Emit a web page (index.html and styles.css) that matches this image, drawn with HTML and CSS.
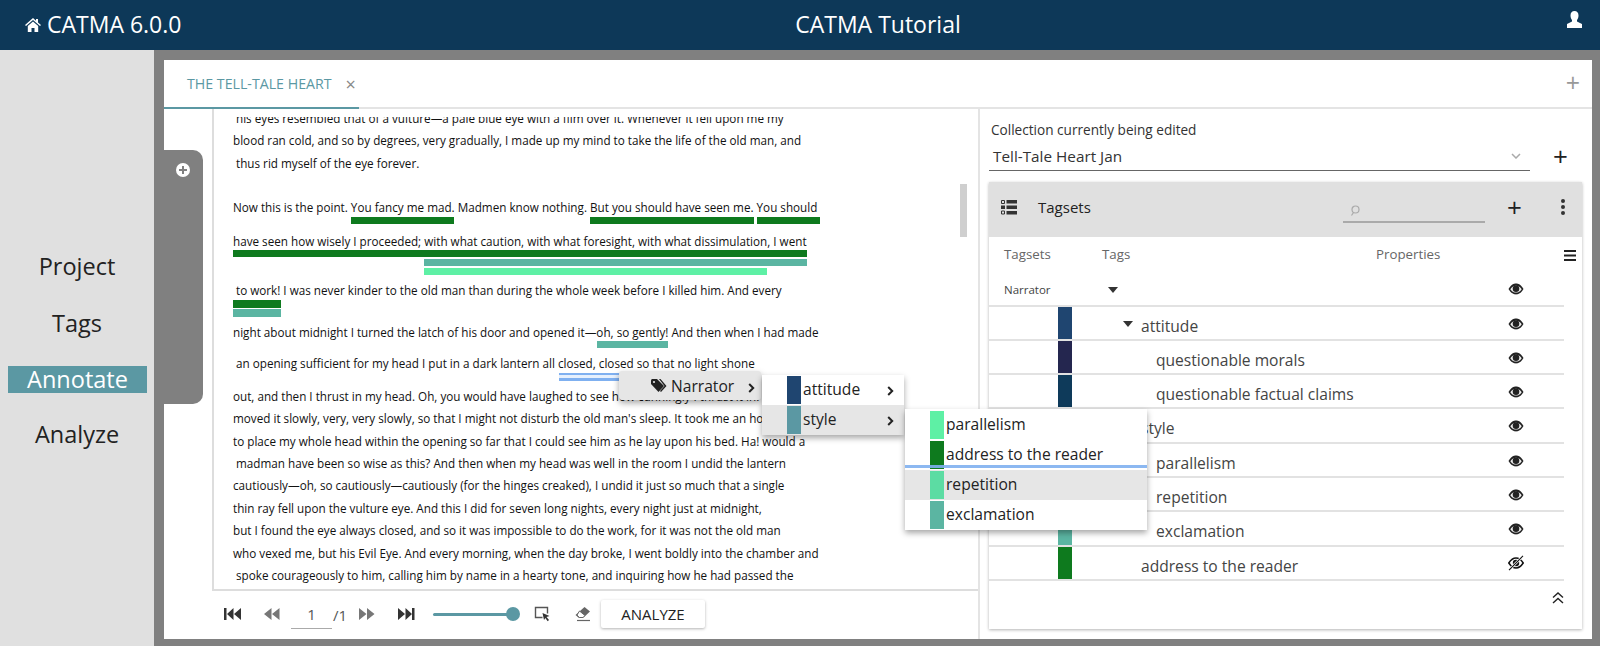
FILE: index.html
```html
<!DOCTYPE html>
<html lang="en">
<head>
<meta charset="utf-8">
<title>CATMA Tutorial</title>
<link rel="stylesheet" href="styles.css">
</head>
<body>
<svg class="defs" width="0" height="0" aria-hidden="true">
  <symbol id="eye" viewBox="0 0 16 12"><path d="M.5 6C3.200 1.600 5.600.6 8 .6s4.800 1 7.500 5.400C12.800 10.400 10.400 11.400 8 11.400S3.200 10.400.5 6z" fill="#222"/><path d="M2.300 6.300C4.300 3.300 6 2.700 8 2.700s3.700.6 5.700 3.600C11.700 9 10 9.600 8 9.600S4.300 9 2.300 6.300z" fill="#eee"/><circle cx="8" cy="5.800" r="3.300" fill="#222"/></symbol>
  <symbol id="eye-off" viewBox="0 0 16 16"><path d="M.8 8C3.400 4 5.700 3 8 3s4.600 1 7.200 5C12.600 12 10.300 13 8 13S3.400 12 .8 8z" fill="none" stroke="#111" stroke-width="1.500"/><circle cx="8" cy="8" r="3.200" fill="#111"/><path d="M15 .8 1 15.200" stroke="#fff" stroke-width="2.400"/><path d="M15 .8 1 15.200" stroke="#111" stroke-width="1.100"/></symbol>
  <symbol id="chev" viewBox="0 0 7 10"><path d="M1.200 1 5.200 5 1.200 9" fill="none" stroke="#222" stroke-width="2"/></symbol>
</svg>

<header class="topbar">
  <div class="brand">
    <svg class="home" viewBox="0 0 16 14"><path d="M8 0 0 7l1 1 7-6 7 6 1-1-3-2.600V1h-2v1.700z" fill="#fff"/><path d="M2.800 8 8 3.500 13.200 8v6H9.500V10h-3v4H2.800z" fill="#fff"/></svg>
    <span>CATMA 6.0.0</span>
  </div>
  <div class="project-title">CATMA Tutorial</div>
  <svg class="user" viewBox="0 0 15 17"><path d="M7.500 0C5 0 3.500 1.500 3.500 4.500c0 2 .8 3.500 1.500 4.500v1.500L0 13v4h15v-4l-5-2.500V9c.7-1 1.500-2.500 1.500-4.500C11.500 1.500 10 0 7.500 0z" fill="#fff"/></svg>
</header>

<div class="shell">
  <nav class="sidenav">
    <a class="nav-item">Project</a>
    <a class="nav-item">Tags</a>
    <a class="nav-item active">Annotate</a>
    <a class="nav-item">Analyze</a>
  </nav>

  <main class="stage">
    <section class="panel">
      <div class="tabbar">
        <div class="tab"><span>THE TELL-TALE HEART</span><span class="tab-close">×</span></div>
        <div class="tab-add">+</div>
      </div>

      <div class="workspace">
        <aside class="flyout">
          <svg class="flyout-plus" viewBox="0 0 14 14"><circle cx="7" cy="7" r="7" fill="#fff"/><path d="M7 3v8M3 7h8" stroke="#808080" stroke-width="2"/></svg>
        </aside>

        <div class="reader">
          <div class="page">
            <div class="doc">
              <div class="line first indent">his eyes resembled that of a vulture—a pale blue eye with a film over it. Whenever it fell upon me my</div>
              <div class="line plain">blood ran cold, and so by degrees, very gradually, I made up my mind to take the life of the old man, and</div>
              <div class="line plain indent">thus rid myself of the eye forever.</div>

              <div class="line para">Now this is the point. You fancy me mad. Madmen know nothing. But you should have seen me. You should</div>
              <div class="bars b-one">
                <div class="bar-row"><i class="bar green" style="margin-left:118px;width:103px"></i><i class="bar green" style="margin-left:136px;width:164px"></i><i class="bar green" style="margin-left:3px;width:63px"></i></div>
              </div>

              <div class="line">have seen how wisely I proceeded; with what caution, with what foresight, with what dissimulation, I went</div>
              <div class="bars b-three">
                <div class="bar-row"><i class="bar green" style="width:574px"></i></div>
                <div class="bar-row"><i class="bar teal" style="margin-left:191px;width:383px"></i></div>
                <div class="bar-row"><i class="bar mint" style="margin-left:191px;width:343px"></i></div>
              </div>

              <div class="line indent">to work! I was never kinder to the old man than during the whole week before I killed him. And every</div>
              <div class="bars b-two">
                <div class="bar-row"><i class="bar green" style="width:48px"></i></div>
                <div class="bar-row"><i class="bar teal" style="width:48px"></i></div>
              </div>

              <div class="line">night about midnight I turned the latch of his door and opened it—oh, so gently! And then when I had made</div>
              <div class="bars b-tight">
                <div class="bar-row"><i class="bar teal" style="margin-left:364px;width:71px"></i></div>
              </div>

              <div class="line indent">an opening sufficient for my head I put in a dark lantern all closed, closed so that no light shone</div>
              <div class="bars b-sel">
                <div class="bar-row"><i class="bar selected" style="margin-left:326px;width:70px"></i></div>
              </div>

              <div class="line">out, and then I thrust in my head. Oh, you would have laughed to see how cunningly I thrust it in! I</div>
              <div class="line plain">moved it slowly, very, very slowly, so that I might not disturb the old man's sleep. It took me an hour</div>
              <div class="line plain">to place my whole head within the opening so far that I could see him as he lay upon his bed. Ha! would a</div>
              <div class="line plain indent">madman have been so wise as this? And then when my head was well in the room I undid the lantern</div>
              <div class="line plain">cautiously—oh, so cautiously—cautiously (for the hinges creaked), I undid it just so much that a single</div>
              <div class="line plain">thin ray fell upon the vulture eye. And this I did for seven long nights, every night just at midnight,</div>
              <div class="line plain">but I found the eye always closed, and so it was impossible to do the work, for it was not the old man</div>
              <div class="line plain">who vexed me, but his Evil Eye. And every morning, when the day broke, I went boldly into the chamber and</div>
              <div class="line plain indent">spoke courageously to him, calling him by name in a hearty tone, and inquiring how he had passed the</div>
            </div>
            <div class="doc-scroll"></div>
          </div>

          <div class="pager">
            <svg class="pg-icon first-icon" viewBox="0 0 17 16"><path d="M0 2h2.500v12H0zM9.500 2v12L3 8zM17 2v12L10 8z" fill="#333"/></svg>
            <svg class="pg-icon prev-icon" viewBox="0 0 17 16"><path d="M8.500 2v12L1 8zM16.500 2v12L9 8z" fill="#777"/></svg>
            <div class="page-input">1</div>
            <span class="page-total">/1</span>
            <svg class="pg-icon next-icon" viewBox="0 0 17 16"><path d="M0 2v12l7.500-6zM8 2v12l7.500-6z" fill="#777"/></svg>
            <svg class="pg-icon last-icon" viewBox="0 0 17 16"><path d="M0 2v12l7-6zM7.500 2v12L14 8zM14 2h2.500v12H14z" fill="#333"/></svg>
            <div class="slider"><div class="slider-thumb"></div></div>
            <svg class="pg-icon select-icon" viewBox="0 0 16 16"><path d="M8 11.500H1V1.500h12v6" fill="none" stroke="#555" stroke-width="1.400"/><path d="M8 7l7 3-3 1 2.500 3-1.300 1.200L10.800 12 9.500 14z" fill="#333"/></svg>
            <svg class="pg-icon eraser-icon" viewBox="0 0 17 16"><path d="M10.500 1 16 5.500 9 12H5L1.500 9z" fill="#666"/><path d="M5.500 5 11 9.500 9 11.500H5.300L3 9z" fill="#fff" stroke="#666"/><path d="M3 14.500h13" stroke="#666" stroke-width="1.200"/></svg>
            <button class="analyze">ANALYZE</button>
          </div>
        </div>

        <div class="tagging">
          <div class="collection-label">Collection currently being edited</div>
          <div class="collection-row">
            <div class="collection-select">
              <span>Tell-Tale Heart Jan</span>
              <svg class="select-caret" viewBox="0 0 10 6"><path d="M1 1l4 4 4-4" fill="none" stroke="#aaa" stroke-width="1.500"/></svg>
            </div>
            <span class="collection-add">+</span>
          </div>

          <div class="card">
            <div class="card-head">
              <svg class="list-icon" viewBox="0 0 16 16"><path d="M.5 1.500h3v3h-3zM.5 12h3v3h-3z" fill="none" stroke="#333"/><path d="M0 6.500h4V10H0zM5.500 1H16v3.500H5.500zM5.500 6.500H16V10H5.500zM5.500 12H16v3.500H5.500z" fill="#333"/></svg>
              <span class="card-title">Tagsets</span>
              <div class="search"><svg class="search-icon" viewBox="0 0 10 12"><circle cx="5.500" cy="4.500" r="3.500" fill="none" stroke="#aaa" stroke-width="1.200"/><path d="M3.500 7.500 1.500 10.500" stroke="#aaa" stroke-width="1.200"/></svg></div>
              <span class="head-add">+</span>
              <svg class="head-more" viewBox="0 0 4 18"><circle cx="2" cy="3" r="2" fill="#333"/><circle cx="2" cy="9" r="2" fill="#333"/><circle cx="2" cy="15" r="2" fill="#333"/></svg>
            </div>

            <div class="col-head">
              <span class="col-a">Tagsets</span>
              <span class="col-b">Tags</span>
              <span class="col-c">Properties</span>
              <svg class="col-menu" viewBox="0 0 12 11"><path d="M0 0h12v2H0zM0 4.500h12v2H0zM0 9h12v2H0z" fill="#222"/></svg>
            </div>

            <div class="row row-set">
              <span class="set-name">Narrator</span>
              <i class="caret caret-set"></i>
              <svg class="eye"><use href="#eye"/></svg>
            </div>
            <div class="row">
              <i class="swatch" style="background:#1f4570"></i>
              <i class="caret caret-tag"></i>
              <span class="tag-name">attitude</span>
              <svg class="eye"><use href="#eye"/></svg>
            </div>
            <div class="row">
              <i class="swatch" style="background:#24264f"></i>
              <span class="tag-name child">questionable morals</span>
              <svg class="eye"><use href="#eye"/></svg>
            </div>
            <div class="row">
              <i class="swatch" style="background:#0e3a5a"></i>
              <span class="tag-name child">questionable factual claims</span>
              <svg class="eye"><use href="#eye"/></svg>
            </div>
            <div class="row">
              <i class="swatch" style="background:#5b98a3"></i>
              <i class="caret caret-tag"></i>
              <span class="tag-name">style</span>
              <svg class="eye"><use href="#eye"/></svg>
            </div>
            <div class="row">
              <i class="swatch" style="background:#5ef0a5"></i>
              <span class="tag-name child">parallelism</span>
              <svg class="eye"><use href="#eye"/></svg>
            </div>
            <div class="row">
              <i class="swatch" style="background:#5cdca3"></i>
              <span class="tag-name child">repetition</span>
              <svg class="eye"><use href="#eye"/></svg>
            </div>
            <div class="row">
              <i class="swatch" style="background:#5bb5a2"></i>
              <span class="tag-name child">exclamation</span>
              <svg class="eye"><use href="#eye"/></svg>
            </div>
            <div class="row">
              <i class="swatch" style="background:#0e7a1e"></i>
              <span class="tag-name">address to the reader</span>
              <svg class="eye off"><use href="#eye-off"/></svg>
            </div>
            <div class="card-foot">
              <svg class="collapse" viewBox="0 0 12 14"><path d="M1 6.500 6 2l5 4.500M1 12l5-4.500L11 12" fill="none" stroke="#222" stroke-width="1.400"/></svg>
            </div>
          </div>
        </div>

        <div class="menu menu-root">
          <svg class="tag-icon" viewBox="0 0 16 14"><path d="M0 1.500C0 .7.700 0 1.500 0H6l7 7-5.500 6L0 5z" fill="#222"/><path d="M8 0h1.500l6 7-5.500 6-1-1 4.500-5z" fill="#222"/><circle cx="3" cy="3" r="1.100" fill="#e6e6e6"/></svg>
          <span>Narrator</span>
          <svg class="chev"><use href="#chev"/></svg>
        </div>

        <div class="menu menu-second">
          <div class="menu-item"><i class="menu-swatch" style="background:#1f4570"></i><span>attitude</span><svg class="chev"><use href="#chev"/></svg></div>
          <div class="menu-item hover"><i class="menu-swatch" style="background:#5b98a3"></i><span>style</span><svg class="chev"><use href="#chev"/></svg></div>
        </div>

        <div class="menu menu-third">
          <div class="menu-item"><i class="menu-swatch" style="background:#5ef0a5"></i><span>parallelism</span></div>
          <div class="menu-item"><i class="menu-swatch" style="background:#0e7a1e"></i><span>address to the reader</span></div>
          <div class="menu-item hover"><i class="menu-swatch" style="background:#5cdca3"></i><span>repetition</span></div>
          <div class="menu-item"><i class="menu-swatch" style="background:#5bb5a2"></i><span>exclamation</span></div>
          <div class="drop-line"></div>
        </div>
      </div>
    </section>
  </main>
</div>
</body>
</html>
```

FILE: styles.css
```css
* { box-sizing: border-box; }

html, body { margin: 0; height: 646px; overflow: hidden; }

body {
  display: flex;
  flex-direction: column;
  font-family: "Open Sans", "Noto Sans", sans-serif;
  color: #222;
  background: #808080;
}

.defs { position: absolute; }

/* top bar */
.topbar {
  height: 50px;
  flex: none;
  display: flex;
  align-items: center;
  padding-bottom: 3px;
  background: #0d3858;
  color: #fff;
  font-size: 23px;
}
.brand {
  width: 154px;
  flex: none;
  display: flex;
  align-items: center;
  gap: 6px;
  padding-left: 25px;
  white-space: nowrap;
}
.home { width: 16px; height: 14px; flex: none; margin-top: 3px; }
.project-title { flex: 1; text-align: center; padding-left: 35px; }
.user { width: 15px; height: 17px; flex: none; margin-right: 18px; margin-top: -8px; }

.shell { flex: 1; display: flex; min-height: 0; }

/* side navigation */
.sidenav {
  width: 154px;
  flex: none;
  background: #e0e0e0;
  display: flex;
  flex-direction: column;
  align-items: center;
  justify-content: center;
  gap: 27px;
  padding-top: 4px;
  font-size: 23.500px;
}
.nav-item { display: block; height: 30px; line-height: 30px; color: #222; }
.nav-item.active {
  align-self: stretch;
  margin: 1px 7px -1px 8px;
  height: 27px;
  line-height: 27px;
  text-align: center;
  background: #5b98a3;
  color: #fff;
}

/* main stage */
.stage { flex: 1; min-width: 0; padding: 10px 8px 7px 10px; }
.panel {
  height: 100%;
  background: #fff;
  display: flex;
  flex-direction: column;
}

.tabbar {
  height: 49px;
  flex: none;
  display: flex;
  justify-content: space-between;
  border-bottom: 2px solid #e4e4e4;
}
.tab {
  width: 195px;
  height: 49px;
  padding-left: 23px;
  display: flex;
  align-items: center;
  gap: 14px;
  border-bottom: 2px solid #5b98a3;
  color: #5b98a3;
  font-size: 14.200px;
  white-space: nowrap;
}
.tab-close { color: #888; font-size: 18px; line-height: 1; }
.tab-add { color: #999; font-size: 25px; line-height: 44px; padding-right: 12px; }

.workspace { position: relative; flex: 1; display: flex; min-height: 0; }

.flyout {
  position: absolute;
  left: 0;
  top: 41px;
  width: 39px;
  height: 254px;
  background: #808080;
  border-radius: 0 10px 10px 0;
  z-index: 2;
}
.flyout-plus { position: absolute; left: 12px; top: 13px; width: 14px; height: 14px; }

/* reader */
.reader {
  width: 816px;
  flex: none;
  display: flex;
  flex-direction: column;
  padding-left: 48px;
  border-right: 2px solid #e4e4e4;
}
.page {
  position: relative;
  flex: 1;
  min-height: 0;
  border-left: 2px solid #ddd;
  border-bottom: 2px solid #ddd;
  padding-top: 8px;
}
.doc {
  height: 100%;
  overflow: hidden;
  padding-left: 19px;
  font-size: 11.700px;
  color: #111;
}
.line { height: 18px; line-height: 18px; white-space: nowrap; }
.first { margin-top: -8px; }
.plain { margin-top: 4.400px; }
.indent { padding-left: 3px; }
.para { margin-top: 26px; }

.bars { display: flex; flex-direction: column; gap: 1.500px; }
.b-one { margin-top: 1px; margin-bottom: 7.500px; }
.b-three { margin-top: 0; margin-bottom: 6px; }
.b-two { margin-top: 1px; margin-bottom: 6px; }
.b-tight { margin-top: 0; margin-bottom: 6px; }
.b-sel { margin-top: 1px; margin-bottom: 6px; }

.bar-row { display: flex; height: 7.500px; }
.bar { display: block; height: 100%; flex: none; }
.green { background: #0e7a1e; }
.teal { background: #5bb5a2; }
.mint { background: #5ef0a5; }
.selected { background: linear-gradient(#7fb0f0 0 30%, #e6f0fd 30% 60%, #7fb0f0 60%); }

.doc-scroll {
  position: absolute;
  right: 11px;
  top: 75px;
  width: 7px;
  height: 53px;
  background: #cfcfcf;
}

/* pager */
.pager {
  height: 48px;
  flex: none;
  display: flex;
  align-items: center;
  padding-left: 12px;
  padding-bottom: 2px;
}
.pg-icon { flex: none; width: 17px; height: 16px; }
.prev-icon { margin-left: 22px; }
.page-input {
  width: 41px;
  height: 28px;
  margin-left: 11px;
  margin-top: 2px;
  line-height: 27px;
  text-align: center;
  font-size: 15px;
  color: #555;
  border-bottom: 1px solid #aaa;
}
.page-total { margin-left: 1px; width: 12px; font-size: 15px; color: #555; margin-top: 2px; }
.next-icon { margin-left: 14px; }
.last-icon { margin-left: 22px; }
.slider {
  position: relative;
  width: 86px;
  height: 3px;
  margin-left: 18px;
  background: #5b98a3;
  border-radius: 2px;
}
.slider-thumb {
  position: absolute;
  right: -1px;
  top: -6px;
  width: 14px;
  height: 14px;
  border-radius: 50%;
  background: #5b98a3;
}
.select-icon { margin-left: 15px; }
.eraser-icon { margin-left: 23px; }
.analyze {
  width: 104px;
  height: 28px;
  margin-left: 10px;
  border: 0;
  border-radius: 2px;
  background: #fff;
  box-shadow: 0 1px 3px rgba(0, 0, 0, .3);
  font: 15px "Open Sans", sans-serif;
  color: #222;
}

/* tagging pane */
.tagging { flex: 1; min-width: 0; padding: 12px 10px 10px 9px; display: flex; flex-direction: column; }
.collection-label { font-size: 13.600px; line-height: 18px; color: #333; padding-left: 2px; }
.collection-row { display: flex; align-items: center; margin-top: 7px; height: 24px; }
.collection-select {
  width: 541px;
  height: 25px;
  padding: 0 9px 3px 4px;
  display: flex;
  justify-content: space-between;
  align-items: center;
  border-bottom: 1px solid #666;
  font-size: 15.300px;
  color: #333;
}
.select-caret { width: 10px; height: 6px; }
.collection-add { margin-left: 23px; margin-top: -5px; font-size: 26px; line-height: 24px; color: #222; }

.card {
  flex: 1;
  margin-top: 12px;
  background: #fff;
  box-shadow: 0 1px 3px rgba(0, 0, 0, .3);
  display: flex;
  flex-direction: column;
  min-height: 0;
}
.card-head {
  height: 55px;
  flex: none;
  display: flex;
  align-items: center;
  background: #e0e0e0;
  padding-left: 12px;
}
.list-icon { width: 16px; height: 16px; flex: none; margin-top: -5px; }
.card-title { margin-left: 21px; font-size: 15px; width: 305px; margin-top: -5px; }
.search { width: 142px; height: 41px; border-bottom: 2px solid #aaa; display: flex; align-items: flex-end; padding: 0 0 4px 7px; margin-top: -14px; }
.search-icon { width: 10px; height: 12px; }
.head-add { margin-left: 22px; font-size: 26px; line-height: 24px; margin-top: -5px; }
.head-more { width: 4px; height: 18px; margin-left: 39px; margin-top: -5px; }

.col-head {
  position: relative;
  height: 36px;
  padding-bottom: 2px;
  display: flex;
  align-items: center;
  font-size: 13.300px;
  color: #666;
}
.col-a { margin-left: 15px; width: 98px; }
.col-b { width: 274px; }
.col-menu { position: absolute; right: 6px; top: 13px; width: 12px; height: 11px; }

.row {
  position: relative;
  width: 575px;
  height: 34.300px;
  flex: none;
  border-bottom: 2px solid #e2e2e2;
  font-size: 15.600px;
  color: #444;
}
.row-set { height: 33.500px; }
.set-name { position: absolute; left: 15px; top: 8px; line-height: 18px; font-size: 11.500px; color: #444; }
.swatch { position: absolute; left: 69px; top: 0; width: 14px; height: 100%; }
.caret { width: 0; height: 0; border-left: 5px solid transparent; border-right: 5px solid transparent; border-top: 6px solid #333; }
.caret-set { position: absolute; left: 119px; top: 14px; }
.caret-tag { position: absolute; left: 134px; top: 14px; }
.tag-name { position: absolute; left: 152px; top: 7px; line-height: 24px; white-space: nowrap; }
.tag-name.child { left: 167px; }
.eye { position: absolute; left: 519px; top: 11px; width: 16px; height: 12px; }
.row-set .eye { top: 10px; }
.eye.off { height: 16px; top: 8px; }
.card-foot { display: flex; justify-content: flex-end; padding: 10px 18px 0 0; }
.collapse { width: 12px; height: 14px; }

/* context menus */
.menu {
  position: absolute;
  z-index: 5;
  background: #fff;
  font-size: 15.600px;
  color: #222;
  box-shadow: 0 3px 6px rgba(0, 0, 0, .35);
}
.menu-root {
  left: 455px;
  top: 262px;
  width: 142px;
  height: 29px;
  background: #e6e6e6;
  border-radius: 3px;
  display: flex;
  align-items: center;
  padding-left: 32px;
  gap: 4px;
}
.tag-icon { width: 16px; height: 14px; flex: none; }
.chev { width: 7px; height: 10px; flex: none; }
.menu-root .chev { margin-left: 10px; margin-top: 5px; }
.menu-second { left: 598px; top: 266px; width: 142px; }
.menu-third { left: 741px; top: 300px; width: 242px; padding-top: 1px; }
.menu-item { position: relative; height: 30px; display: flex; align-items: center; padding: 0 0 2px 41px; }
.menu-item.hover { background: #e6e6e6; }
.menu-item .chev { position: absolute; left: 125px; top: 11px; }
.menu-swatch { position: absolute; left: 25px; top: 1px; width: 14px; height: 28px; }
.menu-third .menu-item span { position: relative; }
.drop-line { position: absolute; left: 0; right: 0; top: 56px; height: 3px; background: #7fb0f0; opacity: .9; }
```
